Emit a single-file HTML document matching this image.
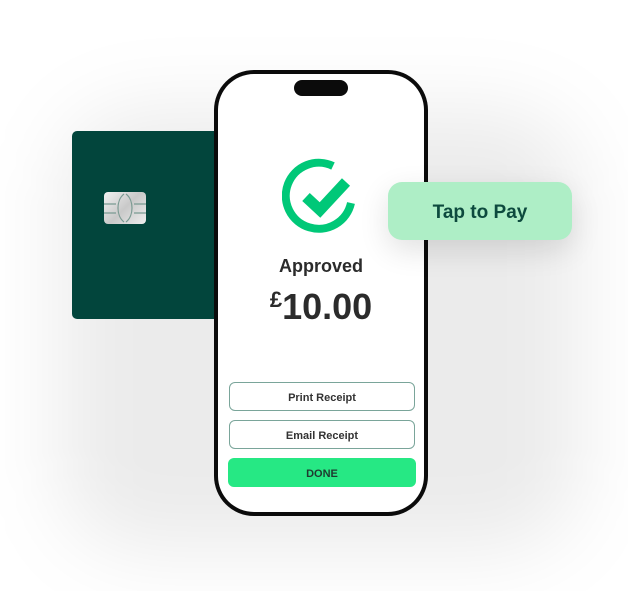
<!DOCTYPE html>
<html><head><style>
body{margin:0;width:628px;height:591px;background:#fff;position:relative;overflow:hidden;font-family:"Liberation Sans",sans-serif}
.shadow{position:absolute;left:60px;top:110px;width:520px;height:440px;border-radius:80px;background:rgba(0,0,0,0.08);filter:blur(40px)}
.card{position:absolute;left:72px;top:131px;width:150px;height:188px;background:#02453c;border-radius:5px}
.chip{position:absolute;left:104px;top:192px;width:42px;height:32px;border-radius:4px;background:linear-gradient(135deg,#f2f2f2,#c9c9c9 50%,#eee)}
.phone{position:absolute;left:214px;top:70px;width:214px;height:446px;background:#0b0b0b;border-radius:40px}
.screen{position:absolute;left:4px;top:4px;width:206px;height:438px;background:#fff;border-radius:36px}
.island{position:absolute;left:76px;top:6px;width:54px;height:16px;background:#0b0b0b;border-radius:9px}
.pill{position:absolute;left:388px;top:182px;width:184px;height:58px;border-radius:14px;background:#aeeec6;color:#0d4a3e;font-weight:bold;font-size:19px;line-height:62px;text-align:center;box-shadow:0 10px 30px rgba(0,0,0,0.12)}
.t{position:absolute;width:206px;left:0;text-align:center;color:#2b2b2b;font-weight:bold}
.btn{position:absolute;left:11px;width:184px;height:27px;border:1px solid #7aa59a;border-radius:6px;text-align:center;line-height:31px;font-size:11px;font-weight:bold;color:#333}
.done{position:absolute;left:10px;top:384px;width:188px;height:29px;background:#26e884;border-radius:6px;text-align:center;line-height:33px;font-size:11px;font-weight:bold;color:#1f3a30}
</style></head><body>
<div class="shadow"></div>
<div class="card"></div>
<div class="chip"><svg width="42" height="32" style="position:absolute;left:0;top:0"><path d="M0 12H12M0 21H12M30 12H42M30 21H42M20 2C12 8 12 24 20 30M22 2C30 8 30 24 22 30" stroke="#7a9a92" stroke-width="1.2" fill="none"/></svg></div>
<div class="phone"><div class="screen">
<div class="island"></div>
<svg style="position:absolute;left:64px;top:83px" width="80" height="80" viewBox="0 0 80 80"><path d="M69 46A33 33 0 1 1 51 9" stroke="#00c878" stroke-width="8" fill="none"/><path d="M24 40L38 53L64 25" stroke="#00c878" stroke-width="11" fill="none"/></svg>
<div class="t" style="top:182px;font-size:18px">Approved</div>
<div class="t" style="top:212px;font-size:36px"><span style="font-size:22px;vertical-align:12px">£</span>10.00</div>
<div class="btn" style="top:308px">Print Receipt</div>
<div class="btn" style="top:346px">Email Receipt</div>
<div class="done">DONE</div>
</div></div>
<div class="pill">Tap to Pay</div>
</body></html>
